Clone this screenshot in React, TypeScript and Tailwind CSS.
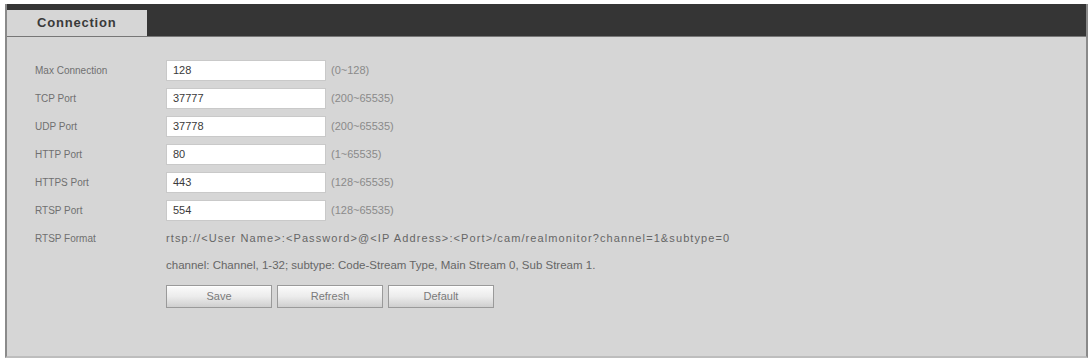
const rows = [
  { label: "Max Connection", value: "128", range: "(0~128)" },
  { label: "TCP Port", value: "37777", range: "(200~65535)" },
  { label: "UDP Port", value: "37778", range: "(200~65535)" },
  { label: "HTTP Port", value: "80", range: "(1~65535)" },
  { label: "HTTPS Port", value: "443", range: "(128~65535)" },
  { label: "RTSP Port", value: "554", range: "(128~65535)" },
]

function Btn({ label }: { label: string }) {
  return (
    <button className="h-[23px] w-[106px] border border-[#9a9a9a] bg-gradient-to-b from-[#fbfbfb] via-[#ececec] to-[#cfcfcf] text-[11px] text-[#7a7a7a] shadow-[inset_0_1px_0_#fff]">
      {label}
    </button>
  )
}

export default function App() {
  return (
    <div className="h-[362px] w-[1090px] bg-white pl-[5px] pt-[4px] font-['Liberation_Sans',Arial,sans-serif]">
      <div className="flex h-[354px] w-[1083px] flex-col border-x-2 border-b-2 border-x-[#8a8a8a] border-b-[#bdbdbd] bg-[#d6d6d6]">
        {/* tab header */}
        <div className="flex h-[32px] items-end bg-[#353535] shadow-[0_1px_0_#777]">
          <div className="flex h-[26px] w-[140px] items-center bg-[#d6d6d6] pl-[30px] text-[13px] font-bold tracking-[0.8px] text-[#3a3a3a]">
            Connection
          </div>
        </div>

        <div className="flex flex-col pl-[28px] pt-[20px] text-[10px] text-[#707070]">
          {rows.map((r) => (
            <div key={r.label} className="flex h-[28px] items-center">
              <div className="w-[131px]">{r.label}</div>
              <div className="flex h-[21px] w-[160px] items-center border border-[#c9c9c9] bg-white pl-[6px] text-[11px] text-[#3a3a3a]">
                {r.value}
              </div>
              <div className="pl-[5px] text-[11px] text-[#8a8a8a]">{r.range}</div>
            </div>
          ))}

          <div className="flex h-[28px] items-center">
            <div className="w-[131px]">RTSP Format</div>
            <div className="text-[11px] tracking-[1.1px] text-[#666]">
              rtsp://&lt;User Name&gt;:&lt;Password&gt;@&lt;IP Address&gt;:&lt;Port&gt;/cam/realmonitor?channel=1&amp;subtype=0
            </div>
          </div>
          <div className="flex h-[28px] items-center pl-[131px] text-[11.5px] text-[#666]">
            channel: Channel, 1-32; subtype: Code-Stream Type, Main Stream 0, Sub Stream 1.
          </div>

          <div className="mt-[5px] flex gap-[5px] pl-[131px]">
            <Btn label="Save" />
            <Btn label="Refresh" />
            <Btn label="Default" />
          </div>
        </div>
      </div>
    </div>
  )
}
